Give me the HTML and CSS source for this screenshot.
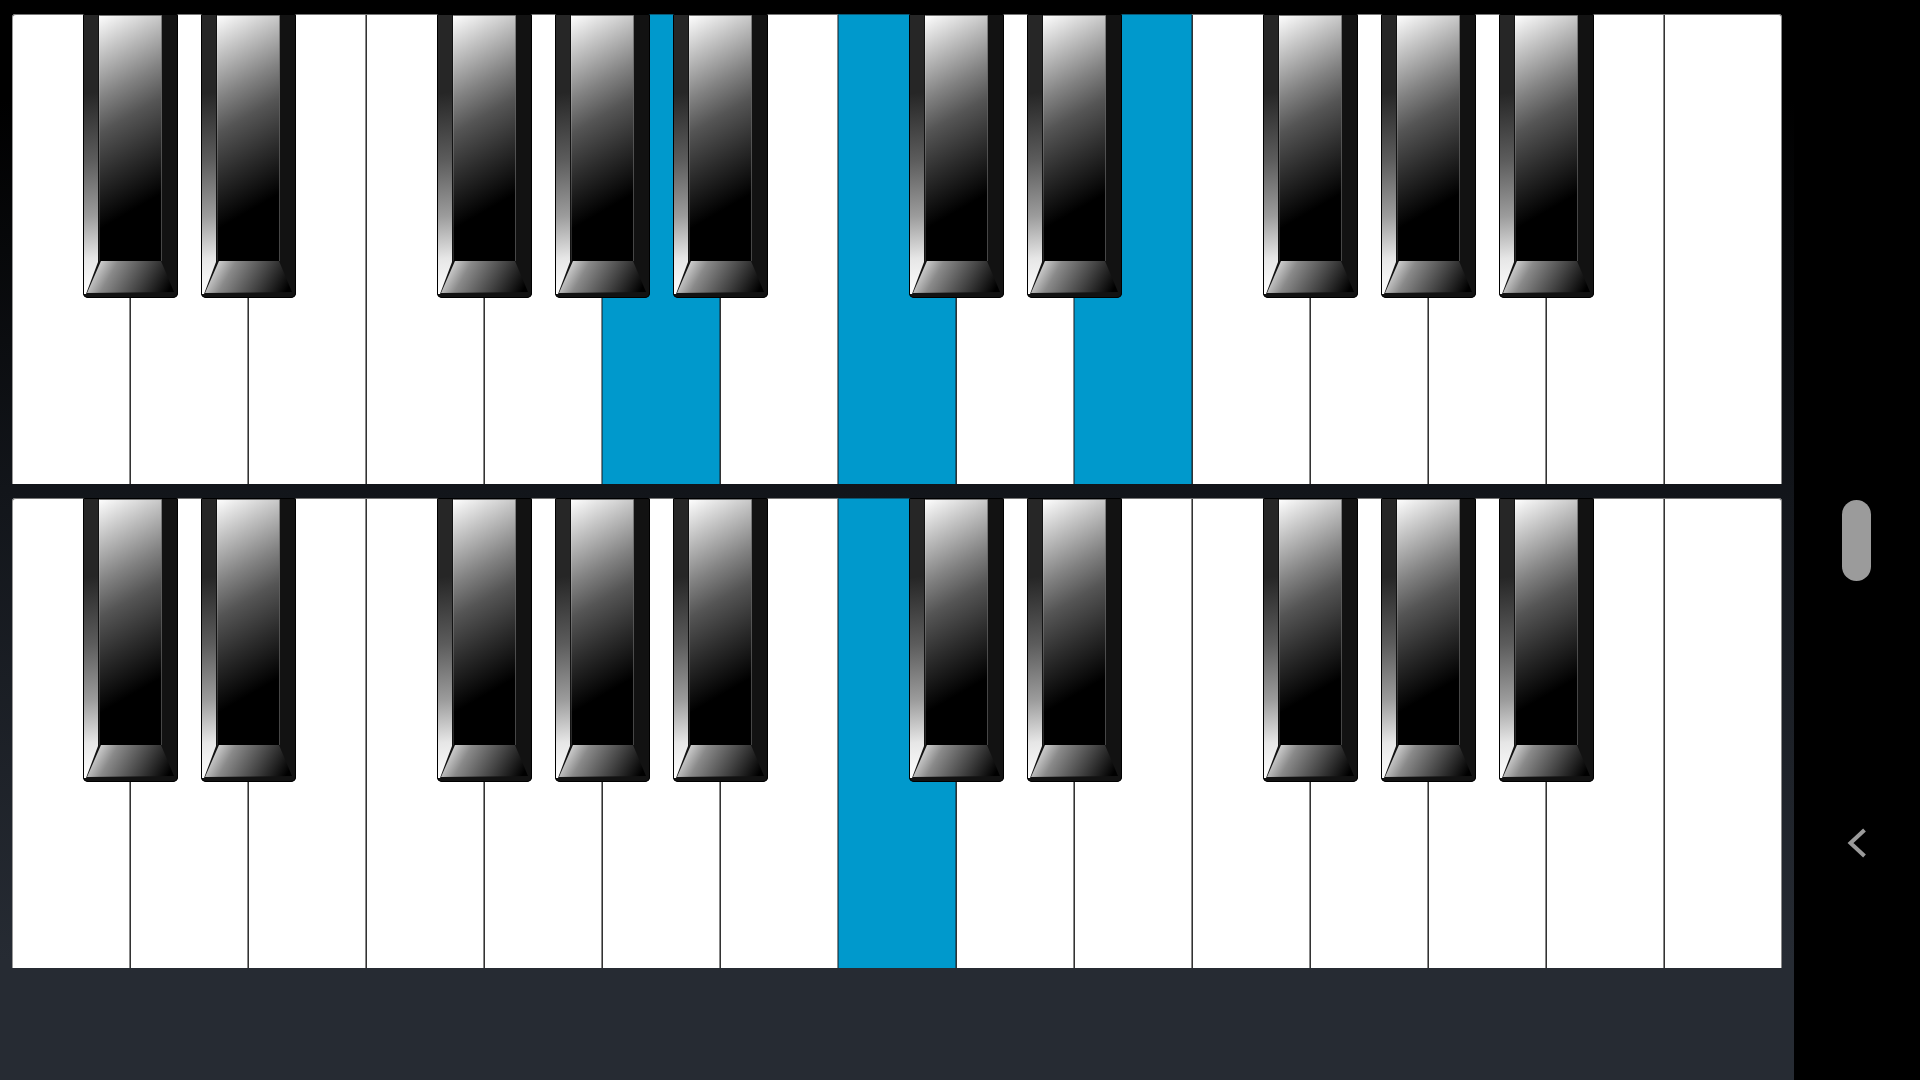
FILE: index.html
```html
<!DOCTYPE html>
<html lang="en">
<head>
<meta charset="utf-8">
<title>Piano scale</title>
<link rel="stylesheet" href="styles.css">
</head>
<body>
<div class="screen">
  <main class="board">
    <div class="row">
      <div class="key"><div class="bk"><i class="left"></i><i class="face"></i><i class="front"></i></div></div>
      <div class="key"><div class="bk"><i class="left"></i><i class="face"></i><i class="front"></i></div></div>
      <div class="key"></div>
      <div class="key"><div class="bk"><i class="left"></i><i class="face"></i><i class="front"></i></div></div>
      <div class="key"><div class="bk"><i class="left"></i><i class="face"></i><i class="front"></i></div></div>
      <div class="key on"><div class="bk"><i class="left"></i><i class="face"></i><i class="front"></i></div></div>
      <div class="key"></div>
      <div class="key on"><div class="bk"><i class="left"></i><i class="face"></i><i class="front"></i></div></div>
      <div class="key"><div class="bk"><i class="left"></i><i class="face"></i><i class="front"></i></div></div>
      <div class="key on"></div>
      <div class="key"><div class="bk"><i class="left"></i><i class="face"></i><i class="front"></i></div></div>
      <div class="key"><div class="bk"><i class="left"></i><i class="face"></i><i class="front"></i></div></div>
      <div class="key"><div class="bk"><i class="left"></i><i class="face"></i><i class="front"></i></div></div>
      <div class="key"></div>
      <div class="key"></div>
    </div>
    <div class="row">
      <div class="key"><div class="bk"><i class="left"></i><i class="face"></i><i class="front"></i></div></div>
      <div class="key"><div class="bk"><i class="left"></i><i class="face"></i><i class="front"></i></div></div>
      <div class="key"></div>
      <div class="key"><div class="bk"><i class="left"></i><i class="face"></i><i class="front"></i></div></div>
      <div class="key"><div class="bk"><i class="left"></i><i class="face"></i><i class="front"></i></div></div>
      <div class="key"><div class="bk"><i class="left"></i><i class="face"></i><i class="front"></i></div></div>
      <div class="key"></div>
      <div class="key on"><div class="bk"><i class="left"></i><i class="face"></i><i class="front"></i></div></div>
      <div class="key"><div class="bk"><i class="left"></i><i class="face"></i><i class="front"></i></div></div>
      <div class="key"></div>
      <div class="key"><div class="bk"><i class="left"></i><i class="face"></i><i class="front"></i></div></div>
      <div class="key"><div class="bk"><i class="left"></i><i class="face"></i><i class="front"></i></div></div>
      <div class="key"><div class="bk"><i class="left"></i><i class="face"></i><i class="front"></i></div></div>
      <div class="key"></div>
      <div class="key"></div>
    </div>
  </main>
  <aside class="nav">
    <div class="handle"></div>
    <svg class="chevron" viewBox="0 0 20 30" aria-hidden="true"><path d="M17.5 2 3.5 15l14 13"/></svg>
  </aside>
</div>
</body>
</html>
```
FILE: styles.css
```css
html, body {
  margin: 0;
  height: 100%;
  overflow: hidden;
}

.screen {
  display: flex;
  width: 1920px;
  height: 1080px;
  background: #000;
}

.board {
  flex: 1;
  display: flex;
  flex-direction: column;
  gap: 14px;
  padding: 14px 12px 0;
  background: linear-gradient(to bottom, #000 100px, #12151a 490px, #262b33 960px);
}

.row {
  display: flex;
  height: 470px;
  border-radius: 4px 4px 0 0;
}

.key {
  position: relative;
  flex: 0 0 118px;
  background: #fff;
  box-shadow: inset 0 1px #777, inset -1px 0 #888, inset 1px 0 #333;
}

.key:first-child {
  border-top-left-radius: 4px;
  box-shadow: inset 0 1px #777, inset -1px 0 #888, inset 1px 0 #999;
}

.key:last-child {
  border-top-right-radius: 4px;
  box-shadow: inset 0 1px #777, inset -1px 0 #888, inset 1px 0 #333;
}

.key.on {
  background: #0099cc;
  box-shadow: inset 0 1px #0a5a78, inset -1px 0 #0a5a78, inset 1px 0 #0a5a78;
}

.bk {
  position: absolute;
  top: 0;
  right: -48px;
  z-index: 1;
  width: 95px;
  height: 284px;
  background: #121212;
  border-radius: 2px 2px 5px 5px;
  box-shadow: inset 0 0 0 1px #000;
  overflow: hidden;
}

.bk i {
  position: absolute;
  display: block;
}

.left {
  top: 1px;
  left: 1px;
  width: 14px;
  height: 279px;
  background: linear-gradient(174deg, #262626 0, #262626 28%, #5c5c5c 52%, #9c9c9c 72%, #e6e6e6 87%, #fff 100%);
  clip-path: polygon(0 0, 100% 0, 100% 247px, 2px 279px, 0 279px);
}

.face {
  top: 1px;
  left: 16px;
  width: 63px;
  height: 246px;
  background: linear-gradient(150deg, #fff 0, #c4c4c4 14%, #828282 30%, #555 42%, #2c2c2c 58%, #000 76%);
  box-shadow: inset 1px 0 rgba(255, 255, 255, .16), inset -1px 0 rgba(100, 100, 100, .7), inset 0 1px #777;
}

.front {
  top: 247px;
  left: 3px;
  width: 90px;
  height: 32px;
  background: linear-gradient(120deg, #d4d4d4 12%, #8a8a8a 30%, #444 62%, #000 92%);
  clip-path: polygon(15px 0, 75px 0, 88px 31px, 1px 32px);
}

.nav {
  position: relative;
  flex: 0 0 126px;
  display: flex;
  flex-direction: column;
  align-items: center;
  background: #000;
}

.handle {
  width: 29px;
  height: 81px;
  margin-top: 500px;
  margin-right: 1px;
  border-radius: 15px;
  background: #9b9b9b;
}

.chevron {
  width: 20px;
  height: 30px;
  margin-top: 247px;
  fill: none;
  stroke: #9b9b9b;
  stroke-width: 4;
}
```
